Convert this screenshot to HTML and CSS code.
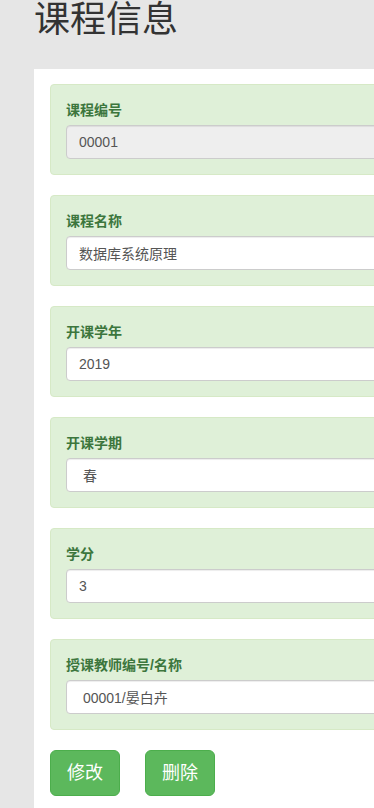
FILE: index.html
```html
<!DOCTYPE html>
<html lang="zh">
<head>
<meta charset="utf-8">
<title>课程信息</title>
<link rel="stylesheet" href="styles.css">
</head>
<body>
<div class="page">
  <h1 class="title">课程信息</h1>
  <div class="sheet">
    <div class="field">
      <label class="label">课程编号</label>
      <input class="input" type="text" value="00001" disabled>
    </div>
    <div class="field">
      <label class="label">课程名称</label>
      <input class="input" type="text" value="数据库系统原理">
    </div>
    <div class="field">
      <label class="label">开课学年</label>
      <input class="input" type="text" value="2019">
    </div>
    <div class="field">
      <label class="label">开课学期</label>
      <input class="input" type="text" value=" 春">
    </div>
    <div class="field">
      <label class="label">学分</label>
      <input class="input" type="text" value="3">
    </div>
    <div class="field">
      <label class="label">授课教师编号/名称</label>
      <input class="input" type="text" value=" 00001/晏白卉">
    </div>
    <div class="actions">
      <button class="btn" type="button">修改</button>
      <button class="btn" type="button">删除</button>
    </div>
  </div>
</div>
</body>
</html>
```

FILE: styles.css
```css
html, body {
  margin: 0;
  padding: 0;
  overflow: hidden;
  background: #e6e6e6;
  font-family: "Liberation Sans", "Noto Sans CJK SC", sans-serif;
  color: #333;
}

.page {
  width: 374px;
  box-sizing: border-box;
  padding-left: 34px;
  min-height: 808px;
  overflow: hidden;
}

.title {
  margin: 0;
  font-size: 36px;
  font-weight: 400;
  line-height: 40px;
  height: 69px;
  color: #333;
}

.sheet {
  background: #fff;
  padding: 15px 0 15px 16px;
  min-height: 760px;
  box-sizing: border-box;
}

.field {
  background: #dff0d8;
  border: 1px solid #d6e9c6;
  border-radius: 4px;
  padding: 15px;
  margin-bottom: 20px;
  margin-right: -40px;
  display: flex;
  flex-direction: column;
}

.label {
  font-size: 14px;
  font-weight: 700;
  line-height: 20px;
  color: #3c763d;
  margin-bottom: 5px;
}

.input {
  height: 34px;
  box-sizing: border-box;
  padding: 6px 12px;
  font-family: "Liberation Sans", "Noto Sans CJK SC", sans-serif;
  font-size: 14px;
  line-height: 20px;
  color: #555;
  background: #fff;
  border: 1px solid #ccc;
  border-radius: 4px;
  box-shadow: inset 0 1px 1px rgba(0, 0, 0, 0.075);
  outline: none;
}

.input:disabled {
  background: #eee;
  color: #555;
  -webkit-text-fill-color: #555;
  opacity: 1;
}

.actions {
  display: flex;
  gap: 25px;
}

.btn {
  height: 46px;
  padding: 10px 16px;
  font-family: "Liberation Sans", "Noto Sans CJK SC", sans-serif;
  font-size: 18px;
  line-height: 24px;
  color: #fff;
  background: #5cb85c;
  border: 1px solid #4cae4c;
  border-radius: 6px;
  box-sizing: border-box;
}
```
